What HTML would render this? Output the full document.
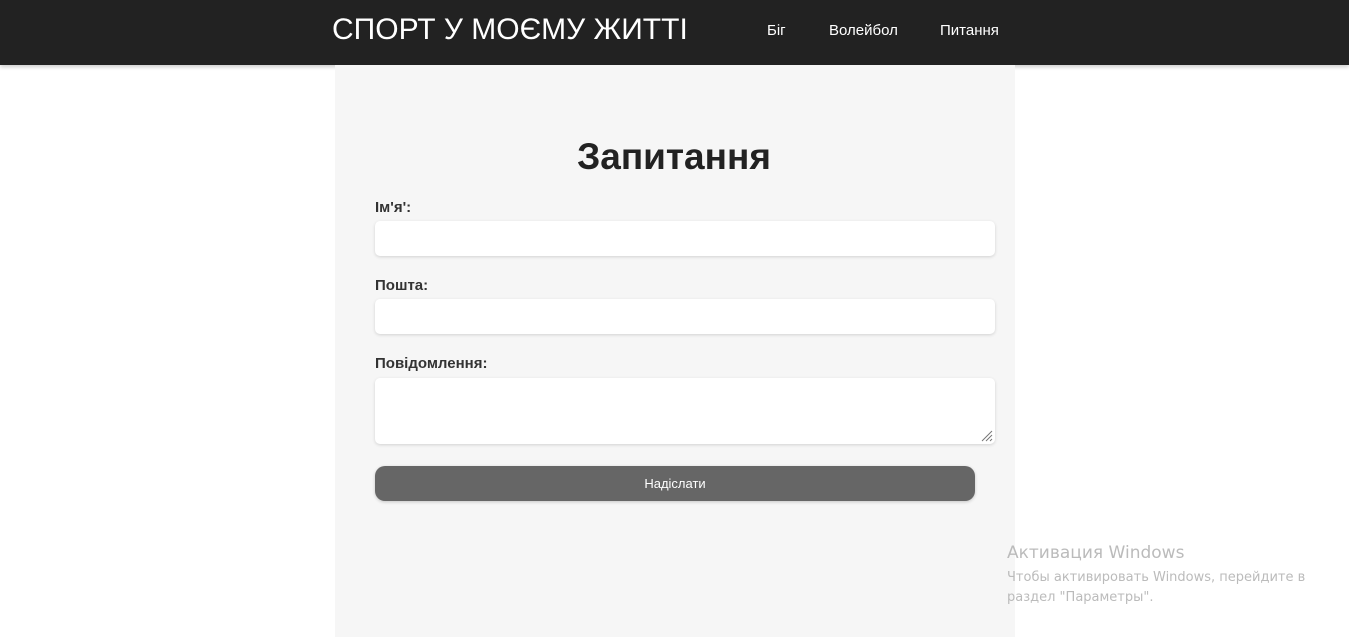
<!DOCTYPE html>
<html><head><meta charset="utf-8"><style>
*{box-sizing:border-box;margin:0;padding:0}
body{width:1349px;height:637px;overflow:hidden;background:#fff;font-family:"Liberation Sans",sans-serif;position:relative}
.hdr{position:absolute;left:0;top:0;width:1349px;height:65px;background:#222;box-shadow:0 2px 4px rgba(0,0,0,.2)}
.brand{position:absolute;left:332px;top:13px;font-size:30px;color:#fff;letter-spacing:0}
.nav{position:absolute;top:22px;font-size:15px;color:#fff}
.panel{position:absolute;left:335px;top:65px;width:680px;height:572px;background:#f6f6f6}
h1{position:absolute;left:0;width:678px;top:71px;text-align:center;font-size:37px;color:#222;font-weight:bold}
label{position:absolute;left:375px;font-size:15px;font-weight:bold;color:#333}
.in{position:absolute;left:375px;width:620px;height:35px;background:#fff;border-radius:5px;box-shadow:0 1px 3px rgba(0,0,0,.15)}
.btn{position:absolute;left:375px;top:466px;width:600px;height:35px;background:#666;border-radius:10px;color:#fff;font-size:13px;text-align:center;line-height:35px;box-shadow:0 1px 3px rgba(0,0,0,.2)}
.wm{position:absolute;left:1007px;color:#bbb;font-family:"DejaVu Sans","Liberation Sans",sans-serif}
</style></head><body>
<div class="hdr">
<div class="brand">СПОРТ У МОЄМУ ЖИТТІ</div>
<div class="nav" style="left:767px">Біг</div>
<div class="nav" style="left:829px">Волейбол</div>
<div class="nav" style="left:940px">Питання</div>
</div>
<div class="panel"><h1>Запитання</h1></div>
<label style="top:199px">Ім'я':</label>
<div class="in" style="top:221px"></div>
<label style="top:277px">Пошта:</label>
<div class="in" style="top:299px"></div>
<label style="top:355px">Повідомлення:</label>
<div class="in" style="top:378px;height:66px">
<svg style="position:absolute;right:2px;bottom:2px" width="12" height="12"><path d="M11 1L1 11M11 5L5 11M11 9L9 11" stroke="#777" stroke-width="1"/></svg></div>
<div class="btn">Надіслати</div>
<div class="wm" style="top:543px;font-size:17px">Активация Windows</div>
<div class="wm" style="top:568px;font-size:13px;line-height:20px;width:320px">Чтобы активировать Windows, перейдите в раздел "Параметры".</div>
</body></html>
